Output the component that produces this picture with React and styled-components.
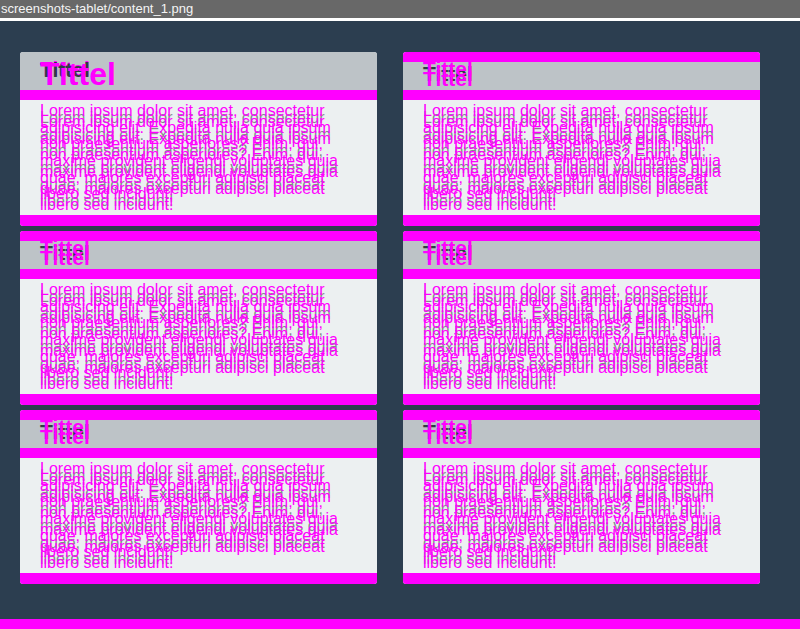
import React from 'react';
import styled, { createGlobalStyle } from 'styled-components';

const TITLE = 'Tittel';
const BODY =
  'Lorem ipsum dolor sit amet, consectetur adipisicing elit. Expedita nulla quia ipsum non praesentium asperiores? Enim, qui, maxime provident eligendi voluptates quia quae, maiores excepturi adipisci placeat libero sed incidunt!';

const CARDS = [
  { id: 1, topBand: false, bigTitle: true },
  { id: 2, topBand: true },
  { id: 3, topBand: true },
  { id: 4, topBand: true },
  { id: 5, topBand: true },
  { id: 6, topBand: true },
];

const App = () => (
  <>
    <PageStyle />
    <Page>
      <FileBar>screenshots-tablet/content_1.png</FileBar>
      <Divider />
      <CardGrid>
        {CARDS.map(card => (
          <Card key={card.id}>
            {card.topBand && <Band size={10} />}
            <Header tall={!card.topBand}>
              {card.bigTitle ? (
                <>
                  <Title offset={6} color='#ff00ff'>{TITLE}</Title>
                  <Title offset={7} color='#2f3a44'>{TITLE}</Title>
                  <Title offset={6} size={32} color='#ff00ff'>{TITLE}</Title>
                </>
              ) : (
                <>
                  <Title offset={1} color='#2f3a44'>{TITLE}</Title>
                  <Title offset={-4} color='#ff00ff'>{TITLE}</Title>
                  <Title offset={6} color='#ff00ff'>{TITLE}</Title>
                </>
              )}
            </Header>
            <Band size={10} />
            <Body>
              <Text offset={10} color='rgba(60, 66, 72, 0.6)'>{BODY}</Text>
              <Text offset={3} color='#ff00ff'>{BODY}</Text>
              <Text offset={14} color='#ff00ff'>{BODY}</Text>
            </Body>
            <Band size={11} />
          </Card>
        ))}
      </CardGrid>
      <Footer />
    </Page>
  </>
);

export default App;

const PageStyle = createGlobalStyle({
  body: {
    margin: 0,
    backgroundColor: '#2c3e50',
    fontFamily: '"Liberation Sans", Helvetica, Arial, sans-serif',
  },
});

const Page = styled.div({
  display: 'flex',
  flexDirection: 'column',
  height: 629,
  overflow: 'hidden',
});

const FileBar = styled.div({
  height: 18,
  backgroundColor: '#686868',
  color: '#f4f4f4',
  fontSize: 13,
  lineHeight: '17px',
  paddingLeft: 1,
  whiteSpace: 'nowrap',
});

const Divider = styled.div({
  height: 3,
  backgroundColor: '#ffffff',
});

const CardGrid = styled.div({
  display: 'grid',
  gridTemplateColumns: '357px 357px',
  columnGap: 26,
  rowGap: 5,
  padding: '31px 0 0 20px',
});

const Card = styled.div({
  display: 'flex',
  flexDirection: 'column',
  borderRadius: 3,
  overflow: 'hidden',
  backgroundColor: '#ecf0f1',
});

const Band = styled.div(({ size }) => ({
  height: size,
  backgroundColor: '#ff00ff',
  flexShrink: 0,
}));

const Header = styled.div(({ tall }) => ({
  display: 'grid',
  height: tall ? 38 : 28,
  padding: '0 20px',
  backgroundColor: '#bdc3c7',
  position: 'relative',
  zIndex: 1,
}));

const Title = styled.div(({ offset, size = 21, color }) => ({
  gridArea: '1 / 1',
  marginTop: offset,
  fontSize: size,
  lineHeight: `${size}px`,
  fontWeight: 'bold',
  color,
  height: size,
}));

const Body = styled.div({
  display: 'grid',
  alignContent: 'start',
  height: 115,
  padding: '0 20px',
  overflow: 'hidden',
});

const Text = styled.p(({ offset, color }) => ({
  gridArea: '1 / 1',
  margin: `${offset}px 0 0`,
  width: 305,
  fontSize: 16,
  lineHeight: '16.67px',
  color,
}));

const Footer = styled.div({
  marginTop: 'auto',
  height: 10,
  backgroundColor: '#ff00ff',
});
